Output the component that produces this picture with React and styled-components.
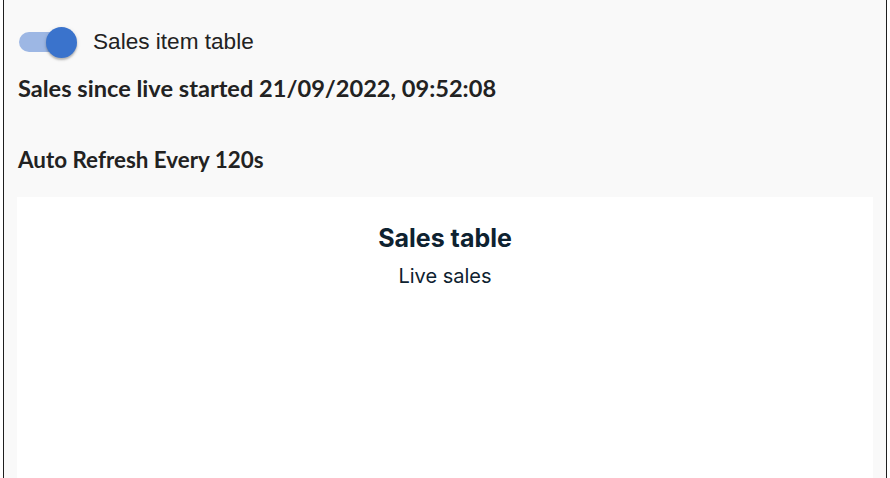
import React, { useState } from "react";
import styled, { createGlobalStyle } from "styled-components";

const GlobalStyle = createGlobalStyle`
  html, body {
    margin: 0;
    padding: 0;
    background: #ffffff;
  }
  #root {
    height: 478px;
  }
`;

const Page = styled.div`
  margin: 0 3px;
  height: 478px;
  box-sizing: border-box;
  border-left: 1px solid #1e1e1e;
  border-right: 1px solid #1e1e1e;
  background: #f9f9f9;
  padding: 24px 13px 0 13px;
  display: flex;
  flex-direction: column;
  overflow: hidden;
`;

const ToggleRow = styled.label`
  display: flex;
  align-items: center;
  gap: 13px;
  height: 36px;
  cursor: pointer;
  font-family: "Liberation Sans", Arial, sans-serif;
  font-size: 22.6px;
  color: #222222;
`;

const Switch = styled.span`
  position: relative;
  width: 63px;
  height: 36px;
  flex-shrink: 0;
`;

const Track = styled.span`
  position: absolute;
  left: 2px;
  top: 8px;
  width: 52px;
  height: 20px;
  border-radius: 10px;
  background: ${({ $on }) => ($on ? "#9db7e4" : "#c4c4c4")};
`;

const Thumb = styled.span`
  position: absolute;
  top: 3px;
  left: ${({ $on }) => ($on ? "29px" : "0px")};
  width: 31px;
  height: 31px;
  border-radius: 50%;
  background: ${({ $on }) => ($on ? "#3a73cc" : "#fafafa")};
  box-shadow: 0 2px 2px rgba(0, 0, 0, 0.22), 0 1px 4px rgba(0, 0, 0, 0.12);
  transition: left 0.15s;
`;

const Heading = styled.h2`
  margin: ${({ $top }) => $top}px 0 0 1px;
  font-family: Lato, "Open Sans", sans-serif;
  font-weight: 700;
  font-size: ${({ $size }) => $size}px;
  line-height: 1.2;
  color: #222222;
`;

const Card = styled.div`
  margin-top: 23px;
  flex: 1;
  background: #ffffff;
  display: flex;
  flex-direction: column;
  align-items: center;
  padding-top: 26px;
`;

const CardTitle = styled.div`
  font-family: Inter, "Open Sans", sans-serif;
  font-weight: 700;
  font-size: 25px;
  line-height: 30px;
  color: #0e2230;
`;

const CardSub = styled.div`
  margin-top: 11px;
  font-family: Inter, "Open Sans", sans-serif;
  font-weight: 400;
  font-size: 20px;
  line-height: 24px;
  color: #0e2230;
`;

export default function App() {
  const [on, setOn] = useState(true);
  return (
    <>
      <GlobalStyle />
      <Page>
        <ToggleRow onClick={() => setOn(!on)}>
          <Switch>
            <Track $on={on} />
            <Thumb $on={on} />
          </Switch>
          Sales item table
        </ToggleRow>
        <Heading $top={14} $size={23.6}>
          Sales since live started 21/09/2022, 09:52:08
        </Heading>
        <Heading $top={45} $size={22.4}>
          Auto Refresh Every 120s
        </Heading>
        <Card>
          <CardTitle>Sales table</CardTitle>
          <CardSub>Live sales</CardSub>
        </Card>
      </Page>
    </>
  );
}
